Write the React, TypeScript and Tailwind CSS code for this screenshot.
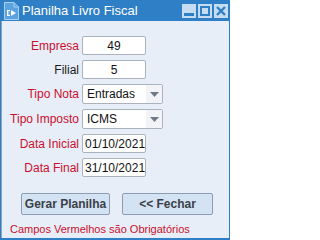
import React from "react";

const font = { fontFamily: '"Liberation Sans", Arial, sans-serif' };

function Label({ text, red }: { text: string; red?: boolean }) {
  return (
    <div className={`w-[80px] text-right text-[12px] leading-none pr-[3px] ${red ? "text-[#c8102e]" : "text-[#1a1a1a]"}`}>
      {text}
    </div>
  );
}

function TextBox({ value, center, w = "w-[64px]" }: { value: string; center?: boolean; w?: string }) {
  return (
    <div className={`${w} h-[19px] bg-white border border-[#a9b2bd] rounded-[2px] flex items-center text-[12px] text-[#111] ${center ? "justify-center" : "pl-[2px]"}`}>
      {value}
    </div>
  );
}

function Select({ value }: { value: string }) {
  return (
    <div className="w-[81px] h-[20px] bg-white border border-[#a9b2bd] rounded-[2px] flex items-center text-[12px] text-[#111]">
      <div className="flex-1 pl-[4px]">{value}</div>
      <div className="w-[16px] h-full bg-[#f1f3f6] flex items-center justify-center">
        <svg width="9" height="5" viewBox="0 0 9 5"><path d="M0 0h9L4.5 5z" fill="#707a86" /></svg>
      </div>
    </div>
  );
}

export default function App() {
  return (
    <div className="w-[230px] h-[240px] bg-[#2f7fc6] flex flex-col" style={font}>
      <div className="h-[21px] flex items-center shrink-0">
        <div className="ml-[3px] w-[16px] h-[18px] flex items-center justify-center">
          <svg width="15" height="18" viewBox="0 0 15 18">
            <path d="M0.5 0.5h9.5l4.5 4.5v12.5H0.5z" fill="#5aa2e0" stroke="#a9d1f2" strokeWidth="1" />
            <path d="M10 0.5v4.5h4.5" fill="none" stroke="#a9d1f2" strokeWidth="1" />
            <path d="M3 8h3v1.3H4.3v3.4H6V14H3z" fill="#fff" />
            <path d="M7 8l5 3-5 3z" fill="#fff" />
          </svg>
        </div>
        <div className="ml-[3px] text-white text-[13px] leading-none">Planilha Livro Fiscal</div>
        <div className="ml-auto mr-[2px] flex gap-[2px]">
          <div className="w-[14px] h-[14px] bg-[#c6dcf0] flex items-end justify-center pb-[2px]">
            <div className="w-[10px] h-[3px] bg-[#2f7fc6]" />
          </div>
          <div className="w-[14px] h-[14px] bg-[#c6dcf0] flex items-center justify-center">
            <div className="w-[10px] h-[10px] border-[2px] border-[#2f7fc6]" />
          </div>
          <div className="w-[14px] h-[14px] bg-[#c6dcf0] flex items-center justify-center">
            <svg width="10" height="10" viewBox="0 0 10 10"><path d="M1 1l8 8M9 1l-8 8" stroke="#2f7fc6" strokeWidth="2.4" /></svg>
          </div>
        </div>
      </div>
      <div className="flex-1 mr-[1px] ml-[1px] mb-[2px] bg-[#e8eef7] border-l border-[#8da4bd] flex flex-col">
        <div className="pt-[15px] flex flex-col gap-[5px]">
          <div className="flex items-center">
            <Label text="Empresa" red />
            <TextBox value="49" center />
          </div>
          <div className="flex items-center">
            <Label text="Filial" />
            <TextBox value="5" center />
          </div>
          <div className="flex items-center">
            <Label text="Tipo Nota" red />
            <Select value="Entradas" />
          </div>
          <div className="flex items-center">
            <Label text="Tipo Imposto" red />
            <Select value="ICMS" />
          </div>
          <div className="flex items-center">
            <Label text="Data Inicial" red />
            <TextBox value="01/10/2021" />
          </div>
          <div className="flex items-center">
            <Label text="Data Final" red />
            <TextBox value="31/10/2021" />
          </div>
        </div>
        <div className="mt-[16px] flex gap-[12px] pl-[19px]">
          <div className="w-[89px] h-[22px] bg-[#d3e3f3] border border-[#8c9cb2] rounded-[2px] flex items-center justify-center text-[12px] font-bold text-[#3a3f46]">
            Gerar Planilha
          </div>
          <div className="w-[91px] h-[22px] bg-[#d3e3f3] border border-[#8c9cb2] rounded-[2px] flex items-center justify-center text-[12px] font-bold text-[#3a3f46]">
            &lt;&lt; Fechar
          </div>
        </div>
        <div className="mt-[9px] pl-[8px] text-[11px] leading-none text-[#c8102e]">Campos Vermelhos são Obrigatórios</div>
      </div>
    </div>
  );
}
